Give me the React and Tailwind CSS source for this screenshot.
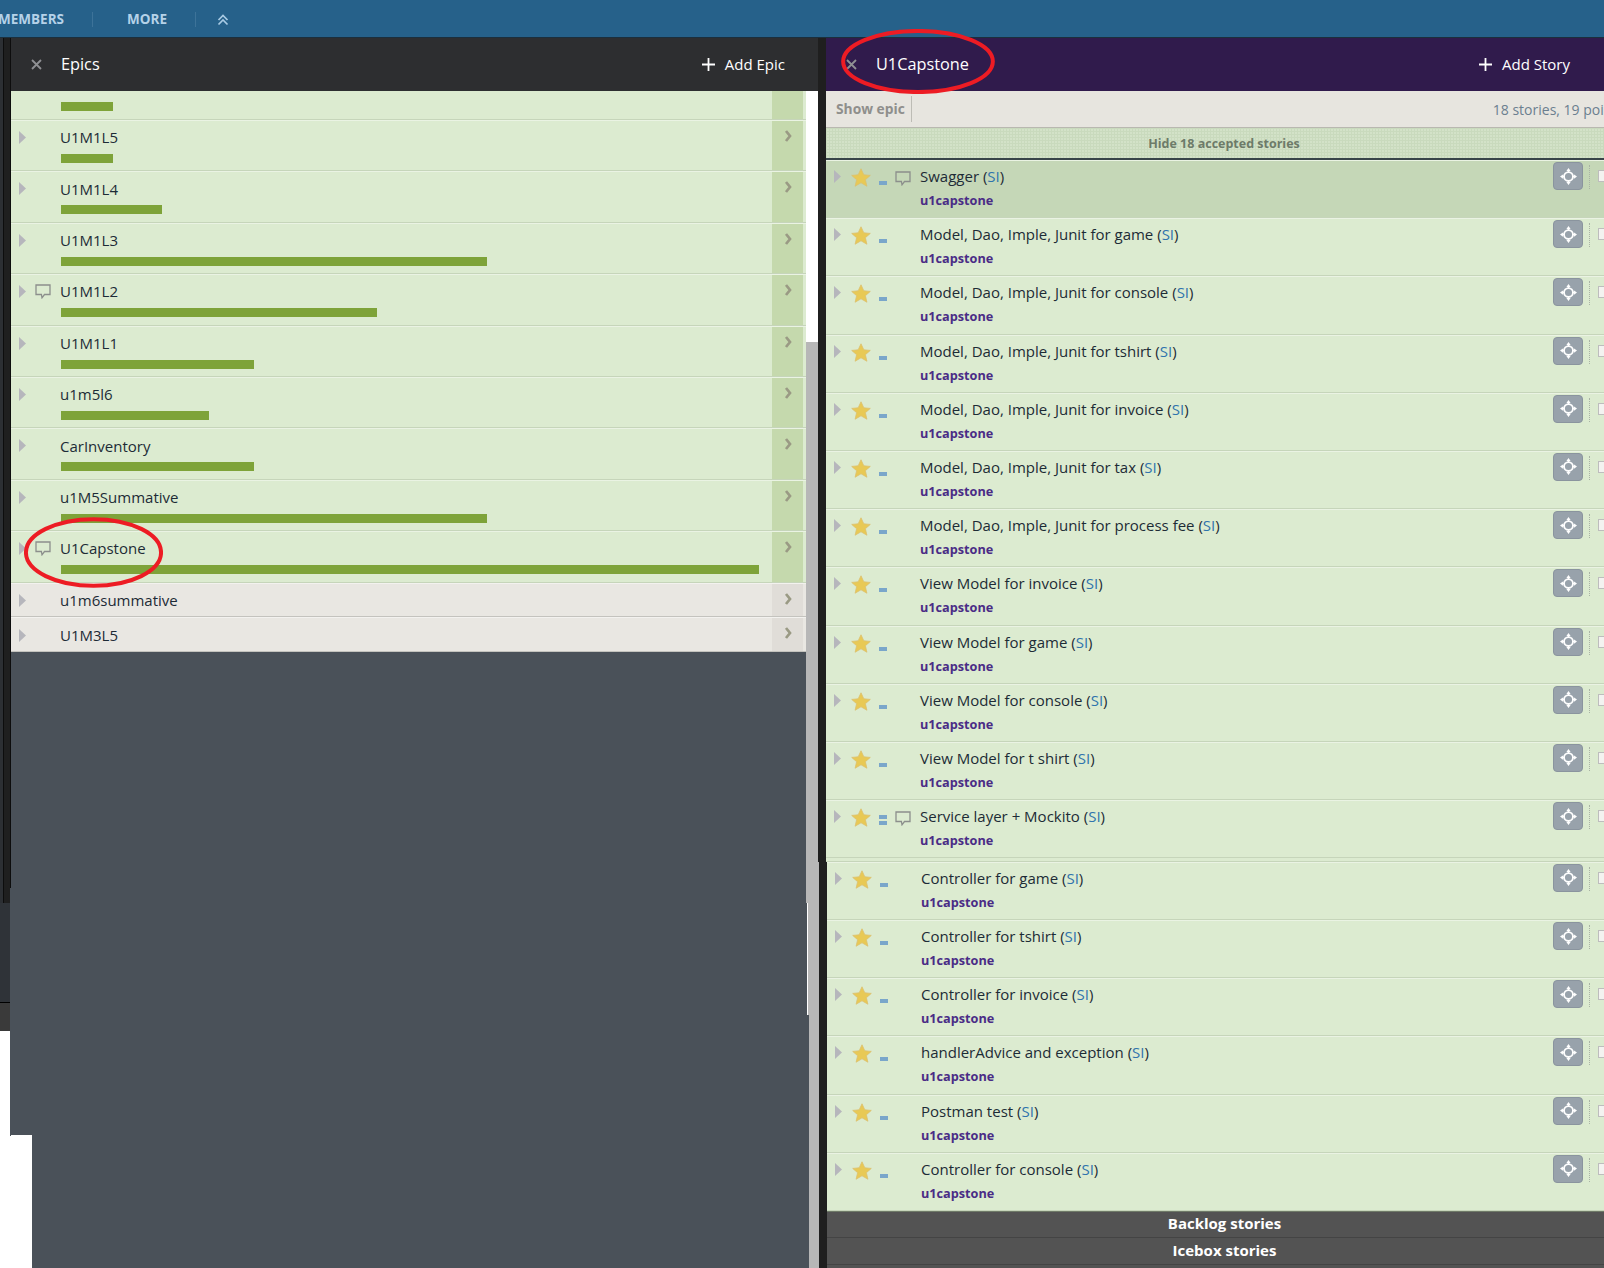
import React from "react";

const Tri = ({ className = "" }) => (
  <svg width="7" height="13" viewBox="0 0 7 13" className={`shrink-0 ${className}`}>
    <path d="M0 0 L7 6.5 L0 13 Z" fill="#b6b6bc" />
  </svg>
);

const Comment = ({ className = "" }) => (
  <svg width="16" height="15" viewBox="0 0 16 15" className={`shrink-0 ${className}`}>
    <path d="M1 1 H15 V10.5 H9.5 L7 13.8 L6.4 10.5 H1 Z" fill="none" stroke="#8c8f8c" strokeWidth="1.3" />
  </svg>
);

const Star = () => (
  <svg width="20" height="19" viewBox="0 0 20 19" className="shrink-0">
    <path d="M10 .8 L12.8 6.8 L19.3 7.4 L14.4 11.7 L15.9 18.2 L10 14.8 L4.1 18.2 L5.6 11.7 L.7 7.4 L7.2 6.8 Z" fill="#e8c955" stroke="#dcc070" strokeWidth=".8" />
  </svg>
);

const Move = () => (
  <svg width="17" height="17" viewBox="0 0 16 16">
    <circle cx="8" cy="8" r="4.2" fill="none" stroke="#ffffff" strokeWidth="1.7" />
    <path d="M8 0 L10 2.8 H6 Z M8 16 L10 13.2 H6 Z M0 8 L2.8 6 V10 Z M16 8 L13.2 6 V10 Z" fill="#ffffff" />
    <path d="M8 2.5 V4 M8 12 V13.5 M2.5 8 H4 M12 8 H13.5" stroke="#ffffff" strokeWidth="1.5" />
  </svg>
);

const Chevron = () => (
  <svg width="8" height="12" viewBox="0 0 8 12">
    <path d="M2 1 L6 6 L2 11" fill="none" stroke="#9a9a84" strokeWidth="2.7" />
  </svg>
);

const X = () => (
  <svg width="11" height="11" viewBox="0 0 11 11">
    <path d="M1 1 L10 10 M10 1 L1 10" stroke="#8f9093" strokeWidth="1.8" />
  </svg>
);

const Plus = () => (
  <svg width="13" height="13" viewBox="0 0 13 13">
    <path d="M6.5 0 V13 M0 6.5 H13" stroke="#ffffff" strokeWidth="1.8" />
  </svg>
);

const Ellipse = ({ className }) => (
  <svg className={`absolute pointer-events-none ${className}`} viewBox="0 0 100 100" preserveAspectRatio="none">
    <ellipse cx="50" cy="50" rx="48.6" ry="47" fill="none" stroke="#ed1c24" vectorEffect="non-scaling-stroke" style={{ strokeWidth: 4 }} />
  </svg>
);

const epics = [
  { name: "U1M1L5", bar: 52 },
  { name: "U1M1L4", bar: 101 },
  { name: "U1M1L3", bar: 426 },
  { name: "U1M1L2", bar: 316, comment: true },
  { name: "U1M1L1", bar: 193 },
  { name: "u1m5l6", bar: 148 },
  { name: "CarInventory", bar: 193 },
  { name: "u1M5Summative", bar: 426 },
  { name: "U1Capstone", bar: 698, comment: true },
];

const EpicRow = ({ e }) => (
  <div className="h-[51.4px] flex bg-[#dcebd0] border-t border-t-[#eaf3e3] border-b border-b-[#c6d5ba] pr-[3px]">
    <div className="flex-1 min-w-0 relative pl-[8px]">
      <div className="flex items-center h-[33px]">
        <Tri />
        <div className="w-[9px]" />
        <div className="w-[16px] flex">{e.comment && <Comment />}</div>
        <div className="w-[9px]" />
        <span className="text-[#1d2b36] text-[15px]">{e.name}</span>
      </div>
      <div className="ml-[42px] h-[9px] bg-[#7ea339]" style={{ width: e.bar }} />
    </div>
    <div className="w-[31px] bg-[#c5d9ad] flex justify-center pt-[9px]">
      <div className="h-[12px] flex"><Chevron /></div>
    </div>
  </div>
);

const GreyRow = ({ name, h }) => (
  <div className={`flex bg-[#e9e7e2] border-t border-t-[#f3f2ef] border-b border-b-[#c4c3be] pr-[3px] ${h}`}>
    <div className="flex-1 flex items-center pl-[8px] pt-[2px]">
      <Tri />
      <div className="w-[34px]" />
      <span className="text-[#1d2b36] text-[15px]">{name}</span>
    </div>
    <div className="w-[31px] bg-[#e0ddd8] flex justify-center pt-[9px]">
      <div className="h-[12px] flex"><Chevron /></div>
    </div>
  </div>
);

const Story = ({ title, selected, points = 1, comment }) => (
  <div className={`h-[58.2px] flex items-start border-t border-t-[#eaf3e3] border-b border-b-[#c6d5ba] ${selected ? "bg-[#c5d7b7]" : "bg-[#dcebd0]"}`}>
    <Tri className="ml-[8px] mt-[9px]" />
    <div className="ml-[10px] mt-[7px]"><Star /></div>
    <div className="ml-[8px] w-[8px] h-[24px] flex flex-col justify-end gap-[2px]">
      {points === 2 && <div className="h-[4px] bg-[#7aa6ca]" />}
      <div className="h-[4px] bg-[#7aa6ca]" />
    </div>
    <div className="ml-[8px] w-[25px] mt-[10px] flex">{comment && <Comment />}</div>
    <div className="flex-1 min-w-0 pt-[3px]">
      <div className="text-[15px] leading-[24px] text-[#1d2b36] whitespace-nowrap">
        {title} (<span className="text-[#2f74ad]">SI</span>)
      </div>
      <div className="text-[12.7px] leading-[25px] font-bold text-[#4a2c86]">u1capstone</div>
    </div>
    <div className="w-[30px] h-[28px] mt-[1px] rounded-[4px] bg-[#98a2ab] border border-[#8a949e] flex items-center justify-center shrink-0">
      <Move />
    </div>
    <div className="ml-[6px] h-[24px] mt-[4px] border-l border-dotted border-l-[#a9b3a5] shrink-0" />
    <div className="ml-[8px] mr-[-8px] mt-[9px] w-[14px] h-[12px] bg-[#f3f3f0] border border-[#bdbdbd] shrink-0" />
  </div>
);

const topStories = [
  { title: "Swagger", selected: true, comment: true },
  { title: "Model, Dao, Imple, Junit for game" },
  { title: "Model, Dao, Imple, Junit for console" },
  { title: "Model, Dao, Imple, Junit for tshirt" },
  { title: "Model, Dao, Imple, Junit for invoice" },
  { title: "Model, Dao, Imple, Junit for tax" },
  { title: "Model, Dao, Imple, Junit for process fee" },
  { title: "View Model for invoice" },
  { title: "View Model for game" },
  { title: "View Model for console" },
  { title: "View Model for t shirt" },
  { title: "Service layer + Mockito", points: 2, comment: true },
];

const lowerStories = [
  "Controller for game",
  "Controller for tshirt",
  "Controller for invoice",
  "handlerAdvice and exception",
  "Postman test",
  "Controller for console",
];

const Stripes = ({ w = "w-[11px]" }) => (
  <div className={`flex h-full ${w}`}>
    <div className="w-[3px] bg-[#2c2f33]" />
    <div className="w-[1px] bg-[#0d0d0d]" />
    <div className="w-[6px] bg-[#1f1f1f]" />
    {w === "w-[11px]" && <div className="w-[1px] bg-[#0d0d0d]" />}
  </div>
);

export default function App() {
  return (
    <div className="relative w-[1604px] h-[1268px] overflow-hidden bg-white font-['Open_Sans',sans-serif]">
      <div className="h-[38px] bg-[#26618a] border-b border-b-[#1b2f3d] flex items-center pt-[2px] text-[13.5px] font-bold text-[#b5d2e8]">
        <span className="ml-[-2px] w-[66px]">MEMBERS</span>
        <div className="ml-[28px] h-[15px] w-px bg-[#3d7399]" />
        <span className="ml-[34px] w-[40px]">MORE</span>
        <div className="ml-[28px] h-[15px] w-px bg-[#3d7399]" />
        <svg width="12" height="12" viewBox="0 0 12 12" className="ml-[21px]">
          <path d="M1.5 6 L6 1.5 L10.5 6 M1.5 10.5 L6 6 L10.5 10.5" fill="none" stroke="#a9cbe4" strokeWidth="1.7" />
        </svg>
      </div>

      <div className="flex h-[1230px]">
        <div className="w-[11px] flex flex-col shrink-0">
          <div className="h-[850px]"><Stripes /></div>
          <div className="h-[15px] bg-[#4a5159]"><Stripes w="w-[10px]" /></div>
          <div className="h-[99px] bg-[#4a5159]"><div className="w-[10px] h-full bg-[#2f3338]" /></div>
          <div className="h-[1px] bg-[#4a5159]"><div className="w-[10px] h-full bg-black" /></div>
          <div className="h-[28px] bg-[#4a5159]"><div className="w-[10px] h-full bg-[#3a3a3a]" /></div>
          <div className="flex-1 bg-white">
            <div className="w-full h-[105px] flex"><div className="w-[10px] bg-white" /><div className="w-[1px] bg-[#4a5159]" /></div>
          </div>
        </div>

        <div className="w-[808px] shrink-0 flex flex-col bg-[#1f1f1f]">
          <div className="w-[807px] h-[53px] bg-[#2d2e30] flex items-center text-white">
            <div className="ml-[20px] flex"><X /></div>
            <span className="ml-[19px] text-[16.3px] flex-1">Epics</span>
            <Plus />
            <span className="ml-[10px] mr-[33px] mb-[1px] text-[15px]">Add Epic</span>
          </div>
          <div className="flex flex-1 min-h-0">
            <div className="w-[795px] flex flex-col bg-[#4a5159]">
              <div className="h-[29px] flex bg-[#dcebd0] border-b border-b-[#c6d5ba] pr-[3px]">
                <div className="flex-1 pl-[50px] pt-[11px]"><div className="w-[52px] h-[9px] bg-[#7ea339]" /></div>
                <div className="w-[31px] bg-[#c5d9ad]" />
              </div>
              {epics.map((e) => <EpicRow key={e.name} e={e} />)}
              <GreyRow name="u1m6summative" h="h-[34px]" />
              <GreyRow name="U1M3L5" h="h-[35px]" />
              <div className="flex-1" />
              <div className="h-[133px] flex">
                <div className="w-[21px] bg-white" />
              </div>
            </div>
            <div className="w-[13px] flex flex-col">
              <div className="h-[251px] flex"><div className="w-[12px] bg-white" /></div>
              <div className="h-[520px] flex"><div className="w-[12px] bg-[#b7b7b7]" /></div>
              <div className="h-[41px] bg-[#b7b7b7]" />
              <div className="h-[112px] flex bg-[#b7b7b7]">
                <div className="w-[1px] bg-[#4a5159]" />
                <div className="w-[1px] bg-white" />
              </div>
              <div className="flex-1 flex bg-[#b7b7b7]">
                <div className="w-[3px] bg-[#4a5159]" />
              </div>
            </div>
          </div>
        </div>

        <div className="flex-1 min-w-0 bg-[#1f1f1f] overflow-hidden flex flex-col">
          <div className="pl-[7px]">
            <div className="h-[53px] bg-[#301b4c] flex items-center text-white">
              <div className="ml-[20px] flex"><X /></div>
              <span className="ml-[19px] text-[16.3px] flex-1">U1Capstone</span>
              <Plus />
              <span className="ml-[10px] mr-[34px] mb-[1px] text-[15px]">Add Story</span>
            </div>
            <div className="h-[37px] bg-[#e7e5df] border-b border-b-[#b9b8b0] flex items-center">
              <span className="ml-[10px] text-[13.8px] font-bold text-[#8f8f8c]">Show epic</span>
              <div className="ml-[6px] h-[26px] w-px bg-[#bdbcb5]" />
              <span className="ml-auto mr-[-20px] text-[14px] text-[#6b7f8f] whitespace-nowrap">18 stories, 19 points</span>
            </div>
            <div className="h-[32px] bg-[#d3e2c8] bg-[linear-gradient(#c9dabd_1px,transparent_1px),linear-gradient(90deg,#c9dabd_1px,transparent_1px)] bg-[length:3px_3px] border-b-2 border-b-[#39454a] flex items-center justify-center pl-[18px] pt-[2px]">
              <span className="text-[12.5px] font-bold text-[#6d7b69]">Hide 18 accepted stories</span>
            </div>
            {topStories.map((s) => <Story key={s.title} {...s} />)}
            <div className="h-[3.6px] bg-[#dcebd0] border-b border-b-[#c6d5ba]" />
          </div>
          <div className="pl-[8px] flex-1 flex flex-col">
            {lowerStories.map((t) => <Story key={t} title={t} />)}
            <div className="h-[27px] bg-[#535353] border-t border-t-[#6f7a68] border-b border-b-[#444444] flex items-center justify-center pl-[18px] pb-[2px] text-white font-bold text-[15px]">Backlog stories</div>
            <div className="h-[27px] bg-[#535353] border-b border-b-[#444444] flex items-center justify-center pl-[18px] pb-[2px] text-white font-bold text-[15px]">Icebox stories</div>
            <div className="flex-1 bg-[#535353]" />
          </div>
        </div>
      </div>

      <Ellipse className="left-[24px] top-[517px] w-[139px] h-[71px]" />
      <Ellipse className="left-[841px] top-[29px] w-[154px] h-[65px]" />
    </div>
  );
}
